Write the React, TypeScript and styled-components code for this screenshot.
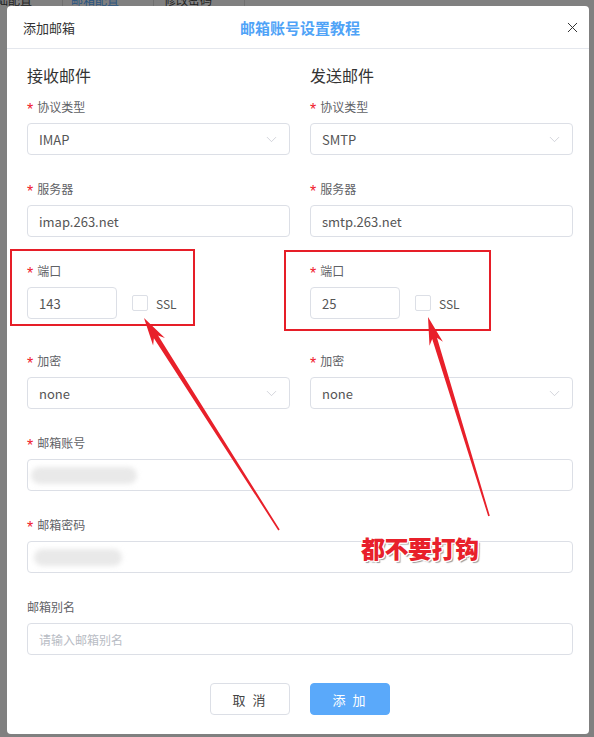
import React from "react";
import styled, { createGlobalStyle } from "styled-components";
import { ChevronDown, X } from "lucide-react";

const Global = createGlobalStyle`
  html, body { margin: 0; padding: 0; background: #808080; }
  body { font-family: "Noto Sans CJK SC", "Noto Sans", sans-serif; }
  * { box-sizing: border-box; }
`;

const Page = styled.div`
  position: relative;
  width: 594px;
  height: 737px;
  overflow: hidden;
  background: #808080;
`;

const TabStrip = styled.div`
  height: 6px;
  overflow: hidden;
  display: flex;
`;

const BgTab = styled.div<{ $w: number; $active?: boolean; $pl: number }>`
  flex: 0 0 ${(p) => p.$w}px;
  height: 6px;
  border-right: 1px solid #707070;
  padding-left: ${(p) => p.$pl}px;
  overflow: hidden;
  span {
    display: block;
    margin-top: -10px;
    line-height: 20px;
    font-size: 12px;
    white-space: nowrap;
    color: ${(p) => (p.$active ? "#2a5580" : "#222")};
  }
`;

const Dialog = styled.div`
  margin-left: 7px;
  width: 582px;
  height: 728px;
  background: #fff;
  border-radius: 4px;
  display: flex;
  flex-direction: column;
`;

const Header = styled.div`
  height: 43px;
  border-bottom: 1px solid #e4e7ed;
  display: grid;
  grid-template-columns: 1fr auto 1fr;
  align-items: center;
  padding: 0 8px 0 16px;
`;

const HeaderTitle = styled.div`
  font-size: 13px;
  color: #333;
`;

const Tutorial = styled.div`
  font-size: 15px;
  font-weight: 700;
  color: #4fa3f7;
  margin-left: -4px;
`;

const Close = styled.div`
  justify-self: end;
  display: flex;
  color: #333;
`;

const Body = styled.div`
  padding: 15px 16px 0 20px;
  display: flex;
  flex-direction: column;
`;

const Columns = styled.div`
  display: grid;
  grid-template-columns: 1fr 1fr;
  column-gap: 20px;
`;

const Column = styled.div`
  display: flex;
  flex-direction: column;
`;

const SectionTitle = styled.div`
  font-size: 16px;
  line-height: 22px;
  color: #333;
  margin-bottom: 11px;
`;

const FormItem = styled.div<{ $gap?: number }>`
  display: flex;
  flex-direction: column;
  margin-bottom: ${(p) => (p.$gap ?? 24)}px;
`;

const Label = styled.div`
  font-size: 12px;
  line-height: 20px;
  color: #5f6266;
  margin-bottom: 6px;
  display: flex;
  align-items: center;
`;

const Star = styled.span`
  color: #f0212b;
  margin-right: 4px;
  font-family: "Liberation Sans", sans-serif;
  font-size: 16px;
  line-height: 20px;
  position: relative;
  top: 3px;
`;

const Field = styled.div<{ $w?: number; $flush?: boolean }>`
  height: 32px;
  width: ${(p) => (p.$w ? `${p.$w}px` : "100%")};
  border: 1px solid #dcdfe6;
  border-radius: 4px;
  padding: ${(p) => (p.$flush ? "0" : "0 9px 0 11px")};
  display: flex;
  align-items: center;
  justify-content: space-between;
  font-size: 13px;
  color: #555;
  overflow: hidden;
`;

const Placeholder = styled.span`
  color: #b8bcc4;
  font-size: 12px;
`;

const Chevron = styled(ChevronDown)`
  color: #c0c4cc;
`;

const Blur = styled.div<{ $w: number; $l: number }>`
  width: ${(p) => p.$w}px;
  height: 17px;
  margin-left: ${(p) => p.$l}px;
  background: #e9e9e9;
  border-radius: 9px;
  filter: blur(2.5px);
`;

const PortRow = styled.div`
  display: flex;
  align-items: center;
`;

const Check = styled.span`
  width: 16px;
  height: 16px;
  border: 1px solid #dcdfe6;
  border-radius: 2px;
  margin-left: 15px;
  margin-right: 8px;
`;

const CheckText = styled.span`
  font-size: 12px;
  color: #555;
`;

const Footer = styled.div`
  display: flex;
  justify-content: center;
  gap: 20px;
  margin-top: 4px;
`;

const Button = styled.div<{ $primary?: boolean }>`
  width: 80px;
  height: 32px;
  border-radius: 4px;
  display: flex;
  align-items: center;
  justify-content: center;
  font-size: 13px;
  letter-spacing: 2px;
  border: 1px solid ${(p) => (p.$primary ? "#5aa9fa" : "#dcdfe6")};
  background: ${(p) => (p.$primary ? "#5aa9fa" : "#fff")};
  color: ${(p) => (p.$primary ? "#fff" : "#444")};
`;

const Overlay = styled.svg`
  position: absolute;
  left: 0;
  top: 0;
  pointer-events: none;
`;

const Note = styled.div`
  position: absolute;
  left: 361px;
  top: 533px;
  font-size: 24px;
  line-height: 30px;
  font-weight: 900;
  color: #e8202a;
  letter-spacing: -0.5px;
  text-shadow: 1px 0 0 #fff, -1px 0 0 #fff, 0 1px 0 #fff, 0 -1px 0 #fff,
    1px 1px 0 #fff, -1px -1px 0 #fff, 1px -1px 0 #fff, -1px 1px 0 #fff,
    2px 2px 1px #9a9a9a;
`;

type Pt = [number, number];

function arrowPoints(tail: Pt, tip: Pt, headLen = 28, headW = 14, shaftHead = 5, shaftTail = 1.6): string {
  const dx = tail[0] - tip[0];
  const dy = tail[1] - tip[1];
  const len = Math.hypot(dx, dy);
  const u: Pt = [dx / len, dy / len];
  const p: Pt = [-u[1], u[0]];
  const at = (d: number, w: number): Pt => [tip[0] + u[0] * d + p[0] * w, tip[1] + u[1] * d + p[1] * w];
  const pts: Pt[] = [
    tip,
    at(headLen, headW / 2),
    at(headLen * 0.8, shaftHead / 2),
    at(len, shaftTail / 2),
    at(len, -shaftTail / 2),
    at(headLen * 0.8, -shaftHead / 2),
    at(headLen, -headW / 2),
  ];
  return pts.map((q) => `${q[0].toFixed(1)},${q[1].toFixed(1)}`).join(" ");
}

const Req: React.FC<{ children: React.ReactNode; required?: boolean }> = ({ children, required = true }) => (
  <Label>
    {required && <Star>*</Star>}
    {children}
  </Label>
);

const SelectField: React.FC<{ value: string }> = ({ value }) => (
  <Field>
    <span>{value}</span>
    <Chevron size={17} strokeWidth={1} />
  </Field>
);

function MailColumn({ title, protocol, server, port }: { title: string; protocol: string; server: string; port: string }) {
  return (
    <Column>
      <SectionTitle>{title}</SectionTitle>
      <FormItem>
        <Req>协议类型</Req>
        <SelectField value={protocol} />
      </FormItem>
      <FormItem>
        <Req>服务器</Req>
        <Field>
          <span>{server}</span>
        </Field>
      </FormItem>
      <FormItem $gap={32}>
        <Req>端口</Req>
        <PortRow>
          <Field $w={90}>
            <span>{port}</span>
          </Field>
          <Check />
          <CheckText>SSL</CheckText>
        </PortRow>
      </FormItem>
      <FormItem>
        <Req>加密</Req>
        <SelectField value="none" />
      </FormItem>
    </Column>
  );
}

export default function App() {
  return (
    <>
      <Global />
      <Page>
        <TabStrip>
          <BgTab $w={63} $pl={0}>
            <span style={{ marginLeft: -16 }}>基础配置</span>
          </BgTab>
          <BgTab $w={91} $pl={8} $active>
            <span>邮箱配置</span>
          </BgTab>
          <BgTab $w={91} $pl={10}>
            <span>修改密码</span>
          </BgTab>
        </TabStrip>
        <Dialog>
          <Header>
            <HeaderTitle>添加邮箱</HeaderTitle>
            <Tutorial>邮箱账号设置教程</Tutorial>
            <Close>
              <X size={17} strokeWidth={1.4} />
            </Close>
          </Header>
          <Body>
            <Columns>
              <MailColumn title="接收邮件" protocol="IMAP" server="imap.263.net" port="143" />
              <MailColumn title="发送邮件" protocol="SMTP" server="smtp.263.net" port="25" />
            </Columns>
            <FormItem>
              <Req>邮箱账号</Req>
              <Field $flush>
                <Blur $w={106} $l={3} />
              </Field>
            </FormItem>
            <FormItem>
              <Req>邮箱密码</Req>
              <Field $flush>
                <Blur $w={88} $l={6} />
              </Field>
            </FormItem>
            <FormItem>
              <Req required={false}>邮箱别名</Req>
              <Field>
                <Placeholder>请输入邮箱别名</Placeholder>
              </Field>
            </FormItem>
            <Footer>
              <Button>取 消</Button>
              <Button $primary>添 加</Button>
            </Footer>
          </Body>
        </Dialog>
        <Overlay width={594} height={737} viewBox="0 0 594 737">
          <rect x={11} y={250} width={183} height={75} fill="none" stroke="#e61e28" strokeWidth={2} />
          <rect x={285} y={251} width={205} height={79} fill="none" stroke="#e61e28" strokeWidth={2} />
          <polygon points={arrowPoints([279, 530], [144, 318])} fill="#e8202a" />
          <polygon points={arrowPoints([489, 516], [428, 317])} fill="#e8202a" />
        </Overlay>
        <Note>都不要打钩</Note>
      </Page>
    </>
  );
}
